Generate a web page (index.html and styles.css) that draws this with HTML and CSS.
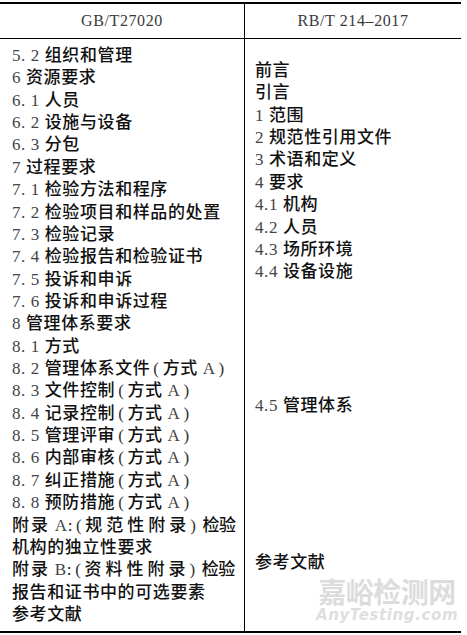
FILE: index.html
```html
<!DOCTYPE html>
<html lang="zh">
<head>
<meta charset="utf-8">
<title>GB/T27020 与 RB/T 214-2017 对照</title>
<link rel="stylesheet" href="styles.css">
</head>
<body>
<div class="page">
  <div class="table">
    <div class="head">
      <div class="hcell left">GB/T27020</div>
      <div class="hcell">RB/T 214–2017</div>
    </div>
    <div class="body">
      <div class="col left-col">
        <div class="ln"><span class="n">5. 2</span> 组织和管理</div>
        <div class="ln"><span class="n">6</span> 资源要求</div>
        <div class="ln"><span class="n">6. 1</span> 人员</div>
        <div class="ln"><span class="n">6. 2</span> 设施与设备</div>
        <div class="ln"><span class="n">6. 3</span> 分包</div>
        <div class="ln"><span class="n">7</span> 过程要求</div>
        <div class="ln"><span class="n">7. 1</span> 检验方法和程序</div>
        <div class="ln"><span class="n">7. 2</span> 检验项目和样品的处置</div>
        <div class="ln"><span class="n">7. 3</span> 检验记录</div>
        <div class="ln"><span class="n">7. 4</span> 检验报告和检验证书</div>
        <div class="ln"><span class="n">7. 5</span> 投诉和申诉</div>
        <div class="ln"><span class="n">7. 6</span> 投诉和申诉过程</div>
        <div class="ln"><span class="n">8</span> 管理体系要求</div>
        <div class="ln"><span class="n">8. 1</span> 方式</div>
        <div class="ln"><span class="n">8. 2</span> 管理体系文件<span class="p">(</span>方式 <span class="n">A</span><span class="p">)</span></div>
        <div class="ln"><span class="n">8. 3</span> 文件控制<span class="p">(</span>方式 <span class="n">A</span><span class="p">)</span></div>
        <div class="ln"><span class="n">8. 4</span> 记录控制<span class="p">(</span>方式 <span class="n">A</span><span class="p">)</span></div>
        <div class="ln"><span class="n">8. 5</span> 管理评审<span class="p">(</span>方式 <span class="n">A</span><span class="p">)</span></div>
        <div class="ln"><span class="n">8. 6</span> 内部审核<span class="p">(</span>方式 <span class="n">A</span><span class="p">)</span></div>
        <div class="ln"><span class="n">8. 7</span> 纠正措施<span class="p">(</span>方式 <span class="n">A</span><span class="p">)</span></div>
        <div class="ln"><span class="n">8. 8</span> 预防措施<span class="p">(</span>方式 <span class="n">A</span><span class="p">)</span></div>
        <div class="ln"><span class="sp2">附录</span> <span class="n">A</span>:<span class="po">(</span><span class="sp4">规范性附录</span><span class="pc">)</span><span class="tight">检验</span></div>
        <div class="ln">机构的独立性要求</div>
        <div class="ln"><span class="sp2">附录</span> <span class="n">B</span>:<span class="po">(</span><span class="sp4">资料性附录</span><span class="pc">)</span><span class="tight">检验</span></div>
        <div class="ln">报告和证书中的可选要素</div>
        <div class="ln">参考文献</div>
      </div>
      <div class="col right-col">
        <div class="ln">前言</div>
        <div class="ln">引言</div>
        <div class="ln"><span class="n">1</span> 范围</div>
        <div class="ln"><span class="n">2</span> 规范性引用文件</div>
        <div class="ln"><span class="n">3</span> 术语和定义</div>
        <div class="ln"><span class="n">4</span> 要求</div>
        <div class="ln"><span class="n">4.1</span> 机构</div>
        <div class="ln"><span class="n">4.2</span> 人员</div>
        <div class="ln"><span class="n">4.3</span> 场所环境</div>
        <div class="ln"><span class="n">4.4</span> 设备设施</div>
        <div class="ln skip5"><span class="n">4.5</span> 管理体系</div>
        <div class="ln skip6">参考文献</div>
      </div>
    </div>
  </div>
  <div class="watermark">
    <div class="wm-cn">嘉峪检测网</div>
    <div class="wm-en">AnyTesting.com</div>
  </div>
</div>
</body>
</html>
```
FILE: styles.css
```css
html, body {
  margin: 0;
  padding: 0;
  background: #fff;
}

.page {
  position: relative;
  width: 467px;
  height: 635px;
  padding-top: 2px;
  box-sizing: border-box;
  overflow: hidden;
}

.table {
  width: 461px;
  border-top: 2px solid #000;
  border-bottom: 2px solid #000;
  font-family: "Liberation Serif", "Noto Sans CJK SC", serif;
  color: #111;
}

.head {
  display: grid;
  grid-template-columns: 245px 1fr;
  height: 34px;
  border-bottom: 1px solid #000;
}

.hcell {
  display: flex;
  align-items: center;
  justify-content: center;
  font-size: 16px;
  letter-spacing: 0.6px;
  color: #3a3a3a;
}

.hcell.left {
  border-right: 1px solid #000;
}

.body {
  display: grid;
  grid-template-columns: 245px 1fr;
  height: 592px;
}

.col {
  font-size: 17px;
  line-height: 22.36px;
  letter-spacing: 0.6px;
  font-weight: 500;
  white-space: nowrap;
}

.left-col {
  border-right: 1px solid #000;
  padding: 6px 12px 0 12px;
}

.right-col {
  padding: 21px 8px 0 10px;
}

.n {
  color: #444;
  font-weight: 400;
}

.p,
.po,
.pc {
  display: inline-block;
  color: #333;
  font-weight: 400;
}

.p {
  margin: 0 3px;
}

.po {
  margin: 0 3px;
}

.pc {
  margin: 0 6px 0 0;
}

.sp2 {
  letter-spacing: 2px;
}

.sp4 {
  letter-spacing: 4px;
}

.tight {
  letter-spacing: -0.5px;
}

.skip5 {
  margin-top: 111.8px;
}

.skip6 {
  margin-top: 134.2px;
}

.watermark {
  position: absolute;
  left: 316px;
  top: 575px;
  width: 142px;
  text-align: center;
  pointer-events: none;
}

.wm-cn {
  font-family: "Noto Sans CJK SC", sans-serif;
  font-weight: 700;
  font-size: 28px;
  line-height: 32px;
  letter-spacing: -0.5px;
  color: rgba(190, 190, 190, 0.55);
}

.wm-en {
  font-family: "DejaVu Sans", sans-serif;
  font-weight: 700;
  font-style: italic;
  font-size: 15px;
  line-height: 17px;
  letter-spacing: 0.6px;
  color: rgba(190, 190, 190, 0.5);
}
```
